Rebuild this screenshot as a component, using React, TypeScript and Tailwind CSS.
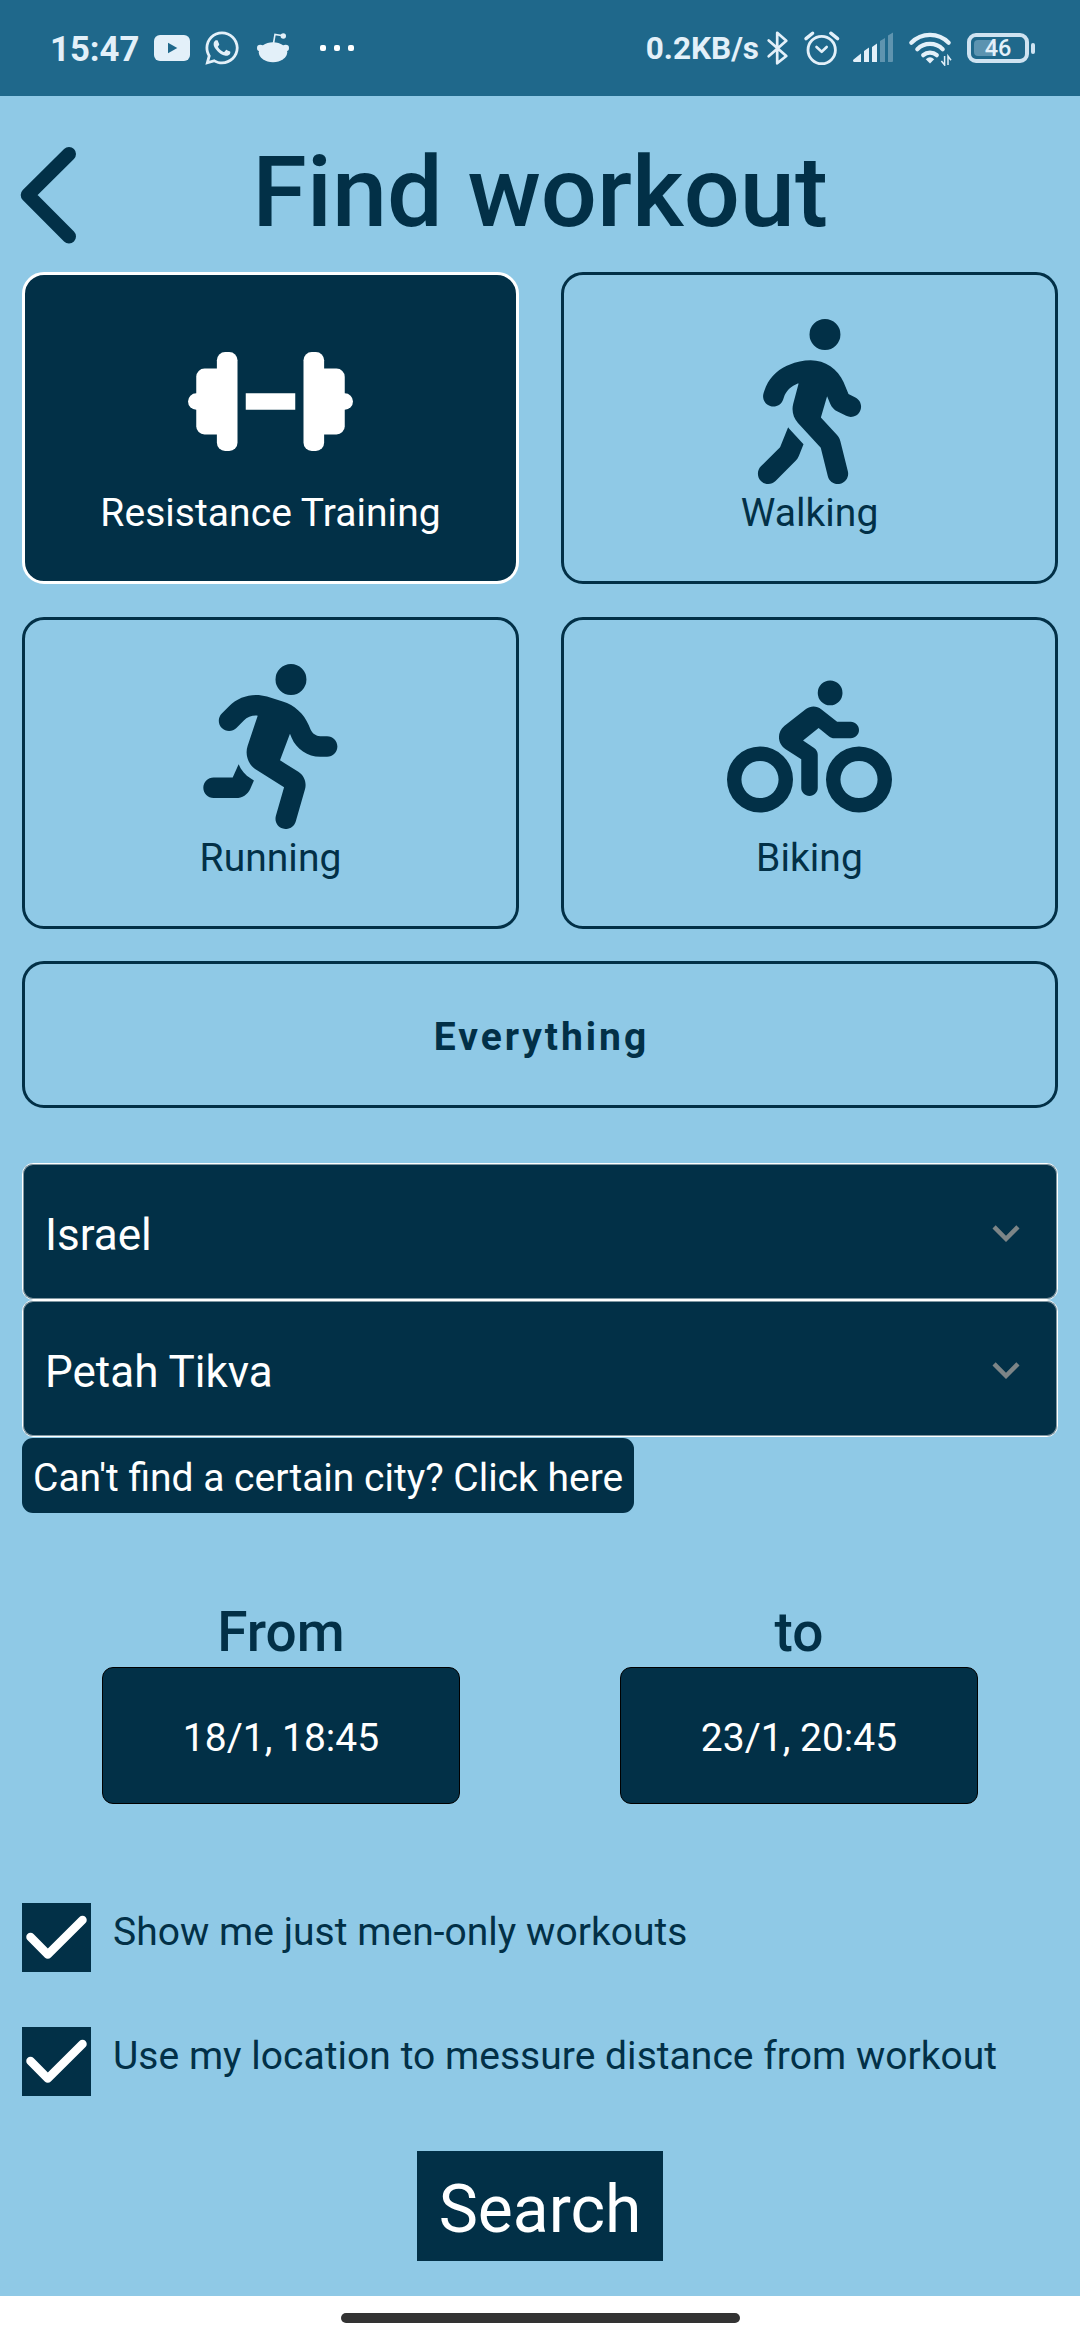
import React from "react";
import { FaWhatsapp } from "react-icons/fa";
import { FaPersonBiking, FaPersonRunning, FaPersonWalking } from "react-icons/fa6";

function YoutubeIcon() {
  return (
    <svg width="36" height="26" viewBox="0 0 36 26" className="ml-[15px]">
      <rect width="36" height="26" rx="6" fill="currentColor" />
      <path d="M14 7.7v10.6l9.3-5.3z" fill="#1f688b" />
    </svg>
  );
}

function RedditIcon() {
  return (
    <svg width="34" height="34" viewBox="0 0 34 34" className="ml-[15px]" fill="currentColor">
      <ellipse cx="17" cy="21.3" rx="14.2" ry="10" />
      <circle cx="4.3" cy="17" r="3.3" />
      <circle cx="29.7" cy="17" r="3.3" />
      <circle cx="27.3" cy="5" r="2.7" />
      <path d="M17.4 13 19 3.4l8 1.4" fill="none" stroke="currentColor" strokeWidth="1.6" />
    </svg>
  );
}

function BluetoothIcon() {
  return (
    <svg width="23" height="36" viewBox="0 0 23 36" className="ml-[7px]" fill="none" stroke="currentColor" strokeWidth="2.7" strokeLinecap="round" strokeLinejoin="round">
      <path d="M2.7 10.5 20.3 26 11.2 33.3V2.8l9.1 8L2.7 26.3" />
    </svg>
  );
}

function AlarmIcon() {
  return (
    <svg width="37" height="36" viewBox="0 0 37 36" className="ml-[14px]" fill="none" stroke="currentColor" strokeWidth="3" strokeLinecap="round" strokeLinejoin="round">
      <circle cx="18.7" cy="20" r="13.7" strokeWidth="2.8" />
      <path d="m13.5 17 5.2 4.8 5-4.8" strokeWidth="2.6" />
      <path d="m3 8.6 6.6-5.4M27.8 3.2l6.800 5.400" strokeWidth="3.4" />
    </svg>
  );
}

function SignalIcon() {
  return (
    <svg width="40" height="36" viewBox="0 0 40 36" className="ml-[13px]" fill="currentColor">
      <path d="M8 23.5V32H1.2c-1.3 0-1.6-1.6-.6-2.5zM11 21l5-3.5V32h-5zM19 17l5-3.5V32h-5z" />
      <path d="M27 11l5-3v24h-5zM35 5.5 40 2.5V31a1 1 0 0 1-1 1h-4z" opacity=".33" />
    </svg>
  );
}

function WifiIcon() {
  return (
    <svg width="44" height="36" viewBox="0 0 44 36" className="ml-[15px]" fill="none" stroke="currentColor" strokeWidth="4.2" strokeLinecap="round">
      <path d="M3.3 12.8a26 26 0 0 1 37.4 0" />
      <path d="M9.3 19.2a18 18 0 0 1 25.4 0" />
      <path d="M15.2 25.2a10.3 10.3 0 0 1 13.6 0" />
      <path d="M17.8 29.3Q22 25 26.2 29.3L22 33.5z" fill="currentColor" stroke="none" />
      <path d="M36.6 26v9l-3.2-4M40 35v-9l3 4.2" strokeWidth="1.5" strokeLinecap="butt" />
    </svg>
  );
}

function Battery() {
  return (
    <div className="ml-[15px] flex items-center gap-[2px] text-[#cfe3f1]">
      <div className="relative flex h-[30px] w-[62px] items-center justify-center rounded-[9px] border-4 border-current">
        <div className="absolute top-[3px] left-[3px] h-4 w-[22px] rounded-[4px] bg-[#5c93b0]" />
        <span className="relative pt-[2px] text-[23.5px] leading-none font-medium text-[#e3f0f9]">46</span>
      </div>
      <div className="h-[11px] w-1 rounded-[2px] bg-current" />
    </div>
  );
}

function StatusBar() {
  return (
    <div className="flex h-24 shrink-0 items-center justify-between bg-[#1f688b] pr-[45px] pl-[50px] text-[#e3f0f9]">
      <div className="flex items-center">
        <span className="pt-[2px] text-[34.7px] leading-[40px] font-bold">15:47</span>
        <YoutubeIcon />
        <FaWhatsapp size={38} className="ml-[13px]" />
        <RedditIcon />
        <div className="ml-[30px] flex gap-2">
          <i className="size-1.5 rounded-[2px] bg-white" />
          <i className="size-1.5 rounded-[2px] bg-white" />
          <i className="size-1.5 rounded-[2px] bg-white" />
        </div>
      </div>
      <div className="flex items-center">
        <span className="pt-[2px] text-[31.5px] leading-[40px] font-bold">0.2KB/s</span>
        <BluetoothIcon />
        <AlarmIcon />
        <SignalIcon />
        <WifiIcon />
        <Battery />
      </div>
    </div>
  );
}

function DumbbellIcon() {
  return (
    <svg width="165" height="165" viewBox="0 -64 640 640" fill="currentColor">
      <path d="M32 224a32 32 0 0 0 0 64h6v-64z" />
      <path d="M144 128H64a32 32 0 0 0-32 32v192a32 32 0 0 0 32 32h80z" />
      <rect x="112" y="64" width="80" height="384" rx="32" />
      <rect x="224" y="224" width="192" height="64" />
      <rect x="448" y="64" width="80" height="384" rx="32" />
      <path d="M496 128h80a32 32 0 0 1 32 32v192a32 32 0 0 1-32 32h-80z" />
      <path d="M608 224a32 32 0 0 1 0 64h-6v-64z" />
    </svg>
  );
}

function ActivityCard({ label, icon, selected = false }: { label: string; icon: React.ReactNode; selected?: boolean }) {
  return (
    <button
      className={`flex flex-col items-center rounded-[22px] border-[3px] pt-[44px] ${
        selected ? "border-white bg-[#023047] text-white" : "border-[#023047] text-[#023047]"
      }`}
    >
      {icon}
      <span className="text-[39px] leading-[58px] tracking-[0.05px]">{label}</span>
    </button>
  );
}

function SelectField({ value }: { value: string }) {
  return (
    <button className="flex h-[137px] items-center justify-between rounded-[11px] border border-white bg-[#023047] pr-[24px] pl-[22px] text-white shadow-[inset_0_0_0_1px_rgba(255,255,255,0.5)]">
      <span className="pt-[7px] text-[44px] leading-[52px]">{value}</span>
      <svg width="54" height="54" viewBox="0 0 24 24" className="mt-[2px]" fill="#7d8587">
        <path d="M7.41 8.59 12 13.17l4.59-4.58L18 10l-6 6-6-6z" />
      </svg>
    </button>
  );
}

function DateField({ label, value }: { label: string; value: string }) {
  return (
    <div className="flex w-[358px] flex-col items-center">
      <span className="mb-[3px] text-[55px] leading-[64px] font-medium">{label}</span>
      <button className="flex h-[137px] w-full items-center justify-center rounded-[11px] border border-black bg-[#023047] pt-[5px] text-[39px] leading-[46px] text-white">
        {value}
      </button>
    </div>
  );
}

function CheckRow({ label }: { label: string }) {
  return (
    <label className="flex h-[69px] gap-[22px]">
      <span className="size-[69px] bg-[#023047]">
        <svg width="69" height="69" viewBox="0 0 69 69" fill="none" stroke="white" strokeWidth="8.5" strokeLinecap="round" strokeLinejoin="round">
          <path d="m8.5 34 17.3 17.5L60.5 17" />
        </svg>
      </span>
      <span className="pt-[6px] text-[39px] leading-[46px] tracking-[0.03px]">{label}</span>
    </label>
  );
}

export default function App() {
  return (
    <div className="flex h-[2340px] w-[1080px] flex-col overflow-hidden bg-white font-[Roboto,sans-serif]">
      <StatusBar />
      <main className="flex h-[2200px] flex-col bg-[#8fc9e6] px-[22px] text-[#023047]">
        <header className="grid h-[176px] shrink-0 grid-cols-[78px_1fr_78px] items-center pt-[16px]">
          <svg width="60" height="100" viewBox="0 0 60 100" className="mt-[6px] -ml-[3px]" fill="none" stroke="currentColor" strokeWidth="14" strokeLinecap="round" strokeLinejoin="round">
            <path d="M50 9 8.7 50 50 91.5" />
          </svg>
          <h1 className="text-center text-[99px] leading-[116px] font-medium whitespace-nowrap">Find workout</h1>
        </header>

        <section className="grid auto-rows-[312px] grid-cols-2 gap-x-[42px] gap-y-[33px]">
          <ActivityCard label="Resistance Training" icon={<DumbbellIcon />} selected />
          <ActivityCard label="Walking" icon={<FaPersonWalking size={165} />} />
          <ActivityCard label="Running" icon={<FaPersonRunning size={165} className="ml-[10px]" />} />
          <ActivityCard label="Biking" icon={<FaPersonBiking size={165} />} />
        </section>
        <button className="mt-[32px] flex h-[147px] shrink-0 items-center justify-center rounded-[22px] border-[3px] border-[#023047] pt-[5px] pl-[3px] text-[39px] leading-[46px] font-bold tracking-[2.95px]">
          Everything
        </button>

        <section className="mt-[55px] flex flex-col">
          <SelectField value="Israel" />
          <SelectField value="Petah Tikva" />
          <button className="mt-px flex h-[75px] w-[612px] items-center self-start rounded-[11px] bg-[#023047] pt-[5px] pl-[11px] text-[39px] leading-[46px] whitespace-nowrap text-white">
            Can't find a certain city? Click here
          </button>
        </section>

        <section className="mt-[87px] flex justify-between px-[80px]">
          <DateField label="From" value="18/1, 18:45" />
          <DateField label="to" value="23/1, 20:45" />
        </section>

        <section className="mt-[99px] flex flex-col gap-[55px]">
          <CheckRow label="Show me just men-only workouts" />
          <CheckRow label="Use my location to messure distance from workout" />
        </section>

        <button className="mt-[55px] flex h-[110px] w-[246px] shrink-0 items-center justify-center self-center bg-[#023047] pt-[7px] text-[66px] leading-[77px] text-white">
          Search
        </button>
      </main>
      <div className="flex h-[44px] shrink-0 justify-center pt-[17px]">
        <div className="h-[10px] w-[399px] rounded-[5px] bg-[#333333]" />
      </div>
    </div>
  );
}
